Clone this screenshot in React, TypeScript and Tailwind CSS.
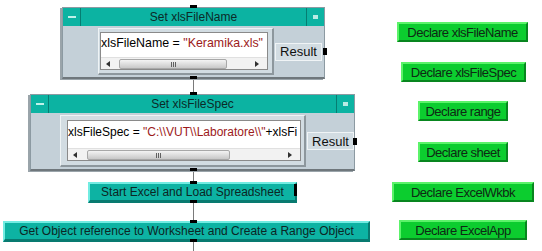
import { FC, ReactNode } from "react";

const font = { fontFamily: '"Liberation Sans", Arial, sans-serif' };

interface BoxProps {
  left: number;
  top: number;
  width: number;
  height: number;
  colW: number;
  panelW: number;
  title: string;
  children: ReactNode;
  textBoxClass: string;
}

// scroll bar that sits at the bottom of a code field
const ScrollBar: FC<{ thumbL: number; thumbW: number }> = ({ thumbL, thumbW }) => {
  return (
    <div className="relative h-[12px] bg-[#f2f2f2] border-t border-[#e0e0e0] flex items-center">
      <span className="absolute left-[5px] top-[3px] w-0 h-0 border-y-[3px] border-y-transparent border-r-[4px] border-r-[#303030]" />
      <div
        className="absolute top-[1px] h-[10px] rounded-[2px] border border-[#a8a8a8] bg-gradient-to-b from-[#f4f4f4] to-[#c8c8c8] flex items-center justify-center gap-[1px]"
        style={{ left: thumbL, width: thumbW }}
      >
        <span className="w-px h-[5px] bg-[#606060]" />
        <span className="w-px h-[5px] bg-[#606060]" />
        <span className="w-px h-[5px] bg-[#606060]" />
      </div>
      <span className="absolute right-[8px] top-[3px] w-0 h-0 border-y-[3px] border-y-transparent border-l-[4px] border-l-[#303030]" />
    </div>
  );
};

const Box: FC<BoxProps> = ({
  left,
  top,
  width,
  height,
  colW,
  panelW,
  title,
  children,
  textBoxClass,
}) => {
  return (
    <div
      className="absolute flex flex-col bg-[#c4d0d8] border border-[#8c9aa2] border-b-2 border-b-[#6f777c] shadow-[-2px_1px_0_#9aa4aa]"
      style={{ left, top, width, height }}
    >
      <div className="h-[18px] bg-[#0cb3a2] flex items-center relative shrink-0">
        <div className="w-[18px] h-[18px] border-r border-[#067d72] flex items-center justify-center">
          <span className="w-[8px] h-[2px] bg-[#bff1ea]" />
        </div>
        <div className="flex-1 text-center text-[12px] text-[#0b2a28] leading-none">{title}</div>
        <div className="w-[18px] h-[18px] border-l border-[#067d72] flex items-center justify-center">
          <span className="w-[5px] h-[4px] bg-[#b9ebe4]" />
        </div>
      </div>
      <div className="flex flex-1 items-start">
        <div className="shrink-0" style={{ width: colW }} />
        <div
          className="mt-[2px] self-stretch mb-[2px] bg-[#d2dce2] border-t border-l border-[#eef3f5] border-r-2 border-b-2 border-r-[#8d979d] border-b-[#8d979d] shrink-0"
          style={{ width: panelW }}
        >
          <div className={"bg-white border border-[#8a8a8a] flex flex-col " + textBoxClass}>{children}</div>
        </div>
        <div className="flex-1 self-center flex">
          <div className="h-[18px] w-[47px] ml-[1px] bg-[#d2dce2] border-t border-l border-[#f0f4f6] border-b border-r border-[#8d979d] flex items-center justify-center text-[13px] text-[#101010] leading-none">
            Result
          </div>
        </div>
      </div>
    </div>
  );
};

const GreenBtn: FC<{ left: number; top: number; width: number; label: string }> = ({
  left,
  top,
  width,
  label,
}) => {
  return (
    <div
      className="absolute h-[20px] bg-[#0ccd2f] border-t-2 border-l-2 border-[#5cf36a] border-b-2 border-r-2 border-b-[#08861f] border-r-[#08861f] flex items-center justify-center text-[13px] tracking-[-0.5px] text-[#0e2a14] leading-none"
      style={{ left, top, width }}
    >
      {label}
    </div>
  );
};

const TealBtn: FC<{ left: number; top: number; width: number; label: string; pin?: boolean }> = ({
  left,
  top,
  width,
  label,
  pin,
}) => {
  return (
    <div
      className="absolute h-[21px] bg-[#0db3a3] border-t-2 border-l-2 border-[#72ece2] border-b-[3px] border-r-2 border-b-[#087a70] border-r-[#087a70] flex items-center justify-center text-[12px] text-[#0c2624] leading-none"
      style={{ left, top, width }}
    >
      {label}
      {pin ? <span className="absolute right-[-2px] top-[0px] w-[3px] h-[12px] bg-black" /> : null}
    </div>
  );
};

const Pin: FC<{ x: number; y: number; w?: number; h?: number }> = ({ x, y, w = 7, h = 3 }) => {
  return <div className="absolute bg-black" style={{ left: x, top: y, width: w, height: h }} />;
};

export default function App() {
  return (
    <div className="relative w-[542px] h-[251px] bg-white overflow-hidden" style={font}>
      {/* sequence wire */}
      <div className="absolute left-[193px] top-[8px] w-px h-[243px] bg-[#7a7a7a]" />

      <Box
        left={62}
        top={7}
        width={263}
        height={72}
        colW={35}
        panelW={176}
        title="Set xlsFileName"
        textBoxClass="mt-[3px] ml-[1px] mr-[4px] h-[38px]"
      >
        <div className="flex-1 text-[12.4px] leading-none pt-[4px] whitespace-nowrap overflow-hidden">
          <span className="text-black">xlsFileName = </span>
          <span className="text-[#9c1a1a]">"Keramika.xls"</span>
        </div>
        <ScrollBar thumbL={18} thumbW={108} />
      </Box>

      <Box
        left={30}
        top={94}
        width={325}
        height={77}
        colW={29}
        panelW={246}
        title="Set xlsFileSpec"
        textBoxClass="mt-[4px] ml-[6px] mr-[3px] h-[41px]"
      >
        <div className="flex-1 text-[12px] leading-none pt-[5px] whitespace-nowrap overflow-hidden">
          <span className="text-black">xlsFileSpec = </span>
          <span className="text-[#9c1a1a]">"C:\\VUT\\Laboratore\\"</span>
          <span className="text-black">+xlsFi</span>
        </div>
        <ScrollBar thumbL={19} thumbW={143} />
      </Box>

      <TealBtn left={88} top={182} width={209} label="Start Excel and Load Spreadsheet" pin />
      <TealBtn left={3} top={221} width={367} label="Get Object reference to Worksheet and Create a Range Object" />

      {/* pins */}
      <Pin x={190} y={5} />
      <Pin x={190} y={76} />
      <Pin x={190} y={92} />
      <Pin x={190} y={168} />
      <Pin x={190} y={181} />
      <Pin x={190} y={200} />
      <Pin x={190} y={220} />
      <Pin x={190} y={239} />
      <Pin x={323} y={48} w={4} h={7} />
      <Pin x={353} y={138} w={4} h={7} />

      <GreenBtn left={397} top={22} width={131} label="Declare xlsFileName" />
      <GreenBtn left={401} top={62} width={125} label="Declare xlsFileSpec" />
      <GreenBtn left={418} top={101} width={90} label="Declare range" />
      <GreenBtn left={418} top={142} width={90} label="Declare sheet" />
      <GreenBtn left={392} top={182} width={142} label="Declare ExcelWkbk" />
      <GreenBtn left={399} top={220} width={128} label="Declare ExcelApp" />
    </div>
  );
}
